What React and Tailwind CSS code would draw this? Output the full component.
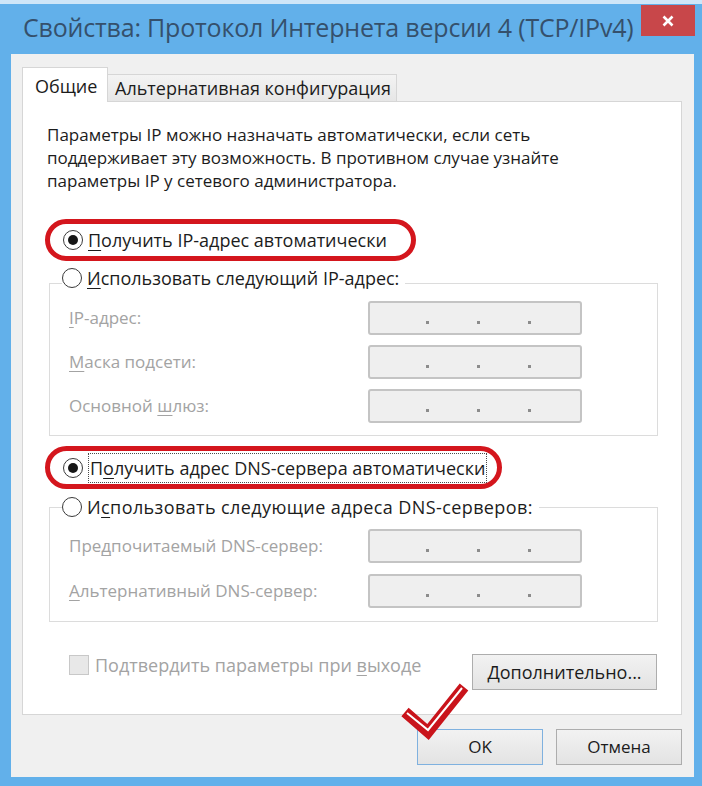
import React from 'react'

const FONT = { fontFamily: '"Open Sans", "Noto Sans", "Liberation Sans", sans-serif' }

/* ── access key underline ── */
const K = ({ children }) => (
  <span className="underline decoration-1 underline-offset-[3px]">{children}</span>
)

/* ── Radio ── */
const Radio = ({ checked }) => (
  <span className="w-[20px] h-[20px] rounded-full border-[1.5px] border-[#3a3a3a] bg-white flex items-center justify-center shrink-0">
    {checked && <span className="w-[10px] h-[10px] rounded-full bg-[#161616]" />}
  </span>
)

const RadioRow = ({ checked, children, className = '' }) => (
  <div className={`flex items-center gap-[5px] h-[24px] text-[18px] text-[#1c1c1c] ${className}`}>
    <Radio checked={checked} />
    <span className="leading-none whitespace-nowrap">{children}</span>
  </div>
)

/* ── Disabled IP field ── */
const IpBox = () => (
  <div className="w-[214px] h-[34px] rounded-[3px] border-2 border-[#c4c4c4] bg-[#efefef] flex items-end justify-center gap-[48px] pb-[9px] pl-[6px]">
    <span className="w-[3px] h-[3px] bg-[#8c8c8c]" />
    <span className="w-[3px] h-[3px] bg-[#8c8c8c]" />
    <span className="w-[3px] h-[3px] bg-[#8c8c8c]" />
  </div>
)

const FieldRow = ({ label, className = '' }) => (
  <div className={`flex items-center pl-[19px] ${className}`}>
    <span className="w-[299px] text-[17px] text-[#a3a3a3]">{label}</span>
    <IpBox />
  </div>
)

const Btn = ({ children, className = '' }) => (
  <button
    type="button"
    className={`h-[36px] border border-[#adadad] bg-gradient-to-b from-[#f2f2f2] to-[#e3e3e3] text-[17px] text-[#1c1c1c] ${className}`}
  >
    {children}
  </button>
)

export default function App() {
  return (
    <div className="relative w-[702px] h-[786px] bg-[#62b0ea] border-t-4 border-[#cfe6f8] flex flex-col" style={FONT}>
      {/* title bar */}
      <div className="h-[50px] flex items-start justify-between pl-[23px] pr-[7px]">
        <span className="mt-[5px] text-[25px] text-[#35506c] tracking-[-0.2px]">
          Свойства: Протокол Интернета версии 4 (TCP/IPv4)
        </span>
        <span className="mt-[1px] w-[54px] h-[31px] bg-[#c8474a] flex items-center justify-center">
          <svg width="12" height="12" viewBox="0 0 12 12">
            <path d="M1.5 1.5 L10.5 10.5 M10.5 1.5 L1.5 10.5" stroke="#fff" strokeWidth="2.6" />
          </svg>
        </span>
      </div>

      {/* window body */}
      <div className="ml-[11px] mr-[8px] bg-[#f0f0f0] flex flex-col pl-[11px] pr-[12px] pt-[13px] pb-[12px]">
        {/* tabs */}
        <div className="flex items-end -mb-px relative z-10">
          <div className="h-[35px] w-[86px] bg-white border border-b-0 border-[#d6d6d6] pl-[12px] pt-[5px] text-[18px] text-[#1c1c1c]">
            Общие
          </div>
          <div className="h-[28px] w-[289px] border border-l-0 border-[#d6d6d6] bg-gradient-to-b from-[#f3f3f3] to-[#e6e6e6] pl-[7px] text-[18px] text-[#1c1c1c] whitespace-nowrap">
            Альтернативная конфигурация
          </div>
        </div>

        {/* panel */}
        <div className="bg-white border border-[#d6d6d6] flex flex-col pl-[24px] pr-[23px] pt-[21px] pb-[24px]">
          <p className="text-[17px] leading-[23px] text-[#1c1c1c]">
            Параметры IP можно назначать автоматически, если сеть
            <br />
            поддерживает эту возможность. В противном случае узнайте
            <br />
            параметры IP у сетевого администратора.
          </p>

          <div className="mt-[27px] -ml-[2px] w-[371px] h-[42px] rounded-full border-[5px] border-[#d4161d] flex items-center pl-[13px]">
            <RadioRow checked>
              <K>П</K>олучить IP-адрес автоматически
            </RadioRow>
          </div>

          <fieldset className="mt-[5px] ml-[2px] w-[609px] border border-[#dcdcdc] pb-[12px]">
            <legend className="ml-[12px] pr-[6px] pb-[10px]">
              <RadioRow>
                <K>И</K>спользовать следующий IP-адрес:
              </RadioRow>
            </legend>
            <FieldRow className="mt-[1px]" label={<><K>I</K>P-адрес:</>} />
            <FieldRow className="mt-[10px]" label={<><K>М</K>аска подсети:</>} />
            <FieldRow className="mt-[10px]" label={<>Основной <K>ш</K>люз:</>} />
          </fieldset>

          <div className="mt-[10px] -ml-[2px] w-[457px] h-[43px] rounded-full border-[5px] border-[#d4161d] flex items-center pl-[13px]">
            <RadioRow checked>
              <span className="border border-dotted border-[#4a4a4a] px-[1px] py-[2px]">
                П<K>о</K>лучить адрес DNS-сервера автоматически
              </span>
            </RadioRow>
          </div>

          <fieldset className="mt-[6px] ml-[2px] w-[609px] border border-[#dcdcdc] pb-[13px]">
            <legend className="ml-[12px] pr-[6px]">
              <RadioRow className="tracking-[0.4px]">
                И<K>с</K>пользовать следующие адреса DNS-серверов:
              </RadioRow>
            </legend>
            <FieldRow className="mt-[10px]" label={<>Пре<K>д</K>почитаемый DNS-сервер:</>} />
            <FieldRow className="mt-[11px]" label={<><K>А</K>льтернативный DNS-сервер:</>} />
          </fieldset>

          <div className="mt-[32px] flex items-start justify-between">
            <div className="ml-[22px] flex items-center gap-[6px] h-[22px] text-[18px] text-[#a3a3a3]">
              <span className="w-[20px] h-[20px] border border-[#c8c8c8] bg-[#e8e8e8]" />
              <span>
                Подтвердить параметры при <K>в</K>ыходе
              </span>
            </div>
            <Btn className="w-[185px] h-[35px] mr-[1px] !text-[18px]">
              <K>Д</K>ополнительно...
            </Btn>
          </div>
        </div>

        {/* dialog buttons */}
        <div className="mt-[14px] flex justify-end gap-[13px]">
          <Btn className="w-[126px] !border-[#7fb1df]">OK</Btn>
          <Btn className="w-[126px]">Отмена</Btn>
        </div>
      </div>

      {/* red check mark annotation */}
      <svg className="absolute left-[398px] top-[674px]" width="72" height="64" viewBox="0 0 72 64">
        <path d="M7 34 L30 54 L66 9" fill="none" stroke="#c9141b" strokeWidth="11" strokeLinejoin="miter" />
        <path d="M9 35 L30 52 L64 10" fill="none" stroke="#ffffff" strokeWidth="2" />
      </svg>
    </div>
  )
}
